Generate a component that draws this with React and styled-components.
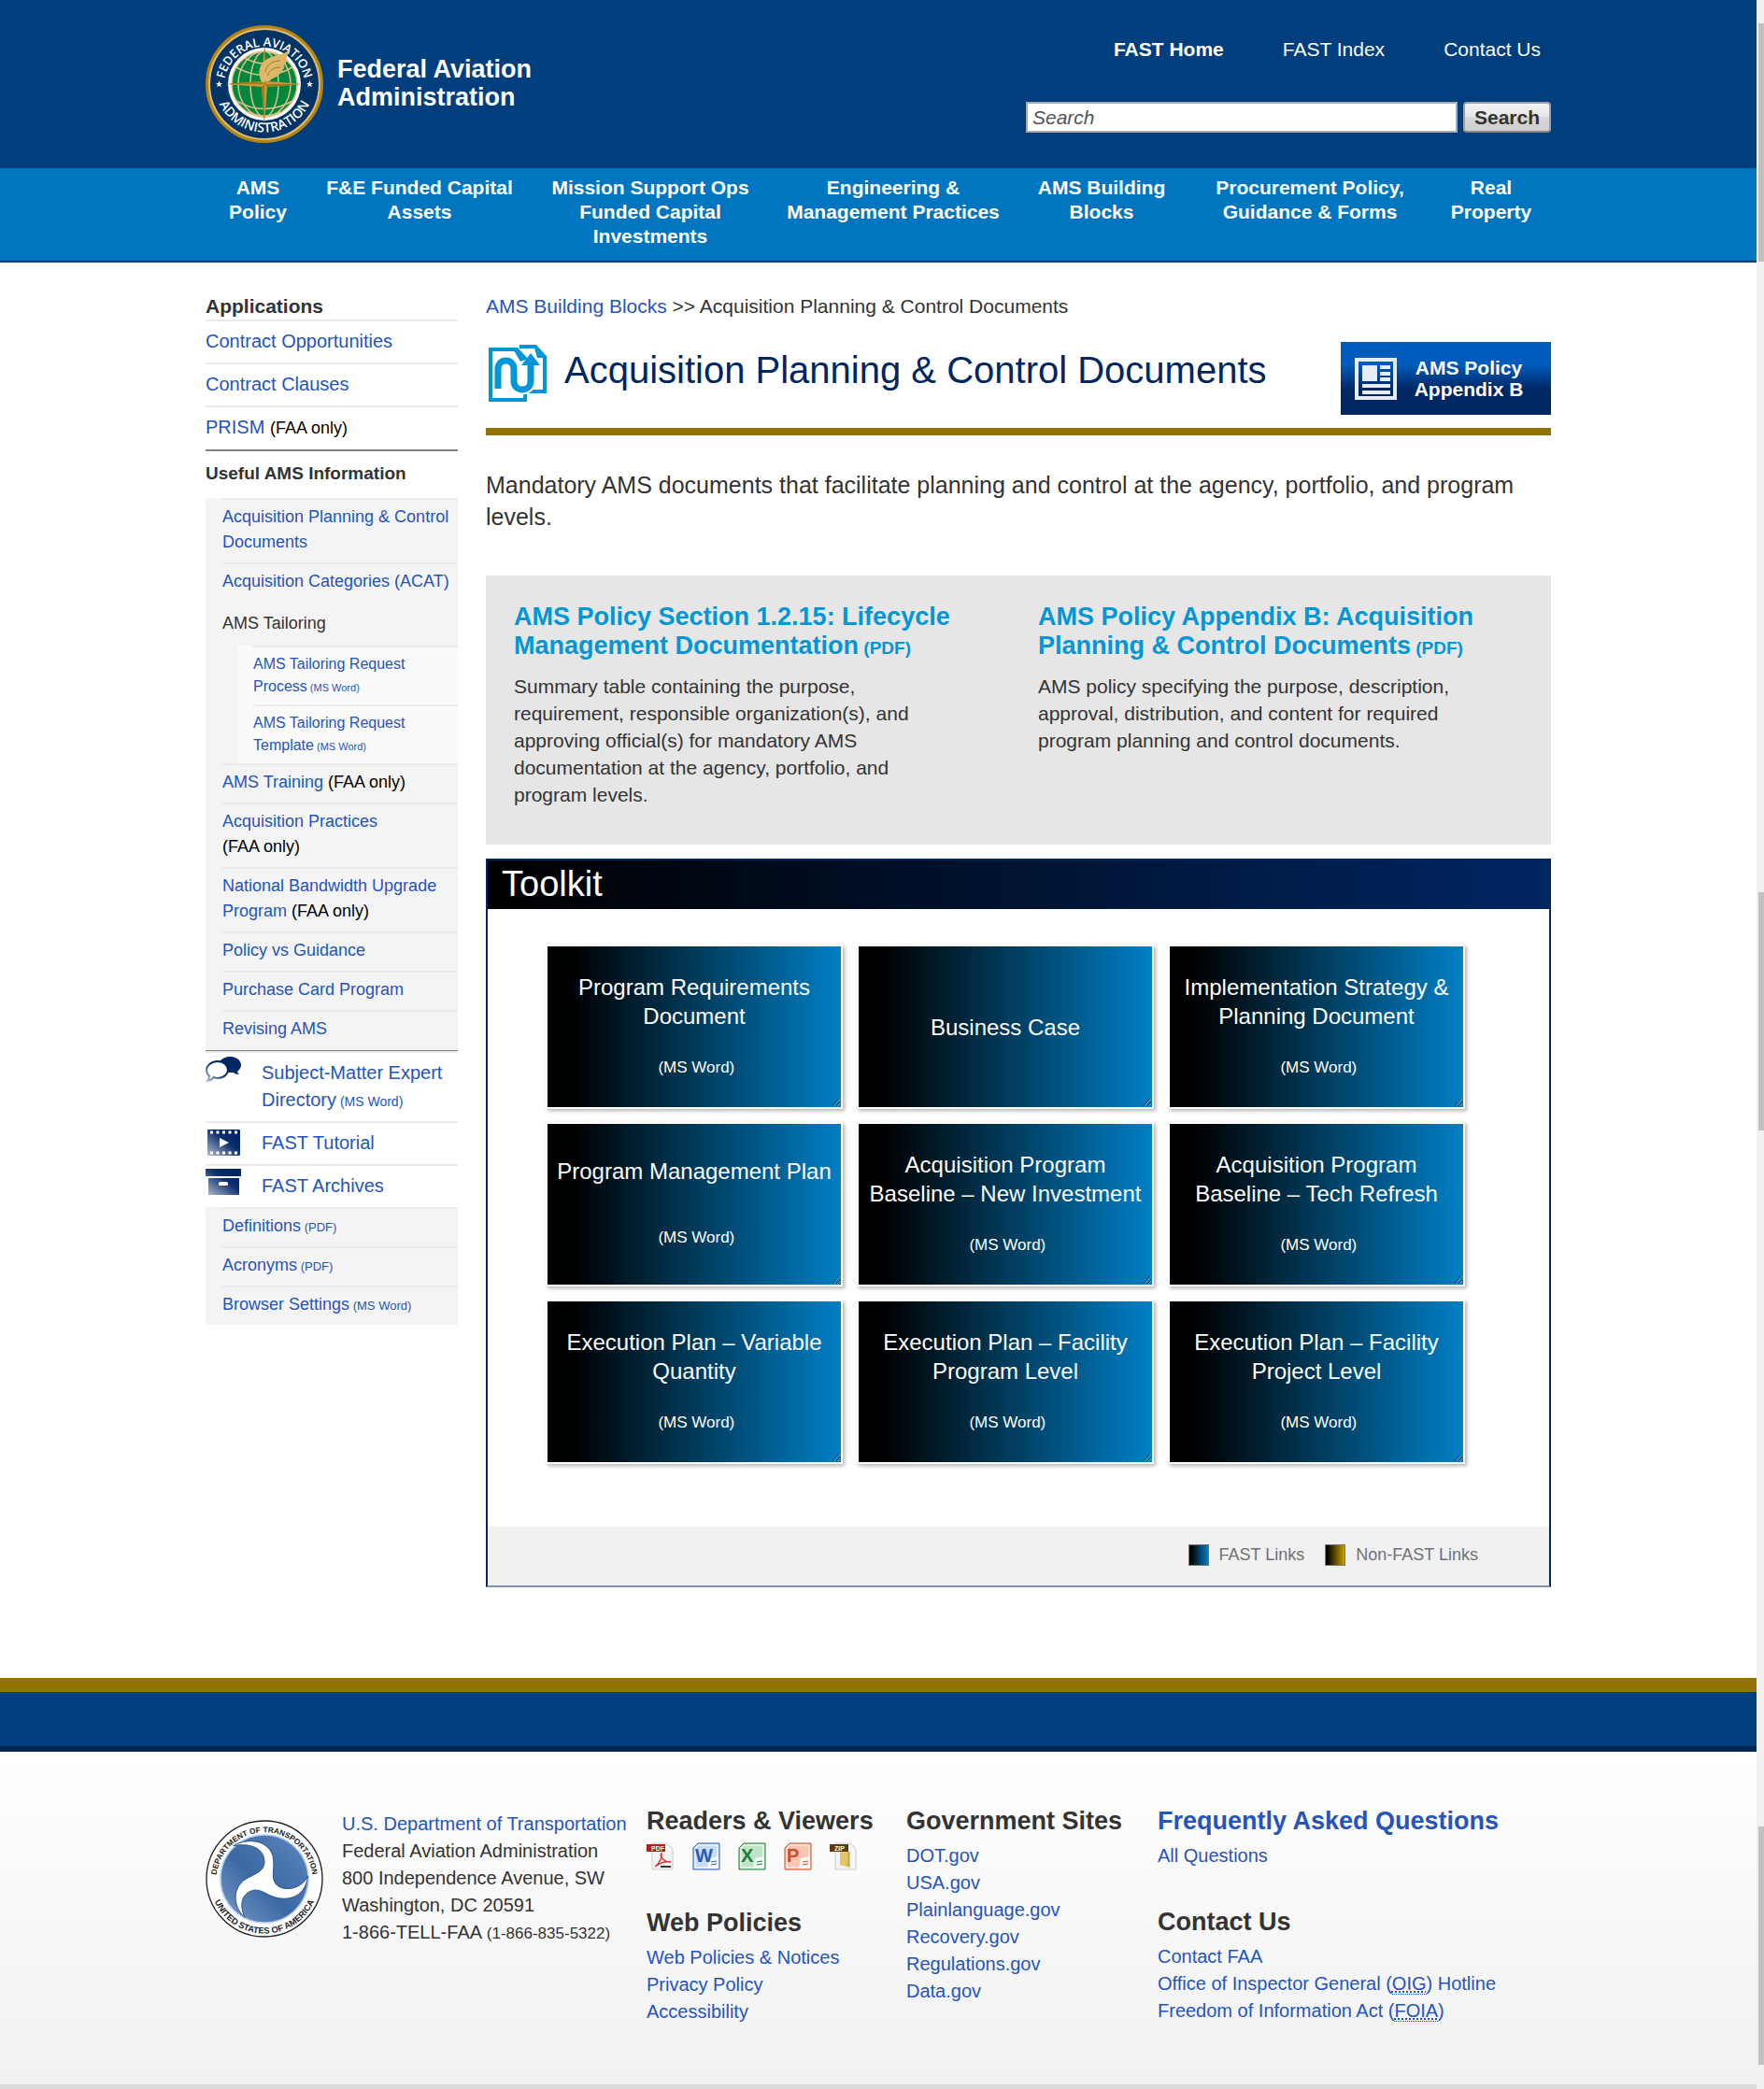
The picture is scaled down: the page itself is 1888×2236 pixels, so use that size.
import React from "react";
import styled, { createGlobalStyle } from "styled-components";

const color = {
  navy: "#003e7e",
  deep: "#002663",
  sky: "#0076c0",
  gold: "#927306",
  link: "#2554bd",
  text: "#333333",
  rule: "#eaeaea",
};

const GlobalStyle = createGlobalStyle`
  *, *::before, *::after { box-sizing: border-box; }
  body {
    margin: 0;
    background: #fff;
    color: ${color.text};
    font-family: "Liberation Sans", Arial, Helvetica, sans-serif;
    font-size: 21px;
    line-height: 28px;
  }
  h1, h2, h3, p, ul { margin: 0; padding: 0; font-weight: normal; }
  ul { list-style: none; }
  a { color: ${color.link}; text-decoration: none; }
  svg { display: block; flex: none; }
`;

const Shell = styled.div`
  display: flex;
`;
const Page = styled.div`
  flex: 1;
  min-width: 0;
`;
const Track = styled.div`
  flex: none;
  width: 8px;
  padding-left: 2px;
  background: #f0f0f0;
`;
const Thumb = styled.div`
  height: 255px;
  margin-top: ${(p) => p.$before}px;
  background: #c1c1c1;
`;
const Container = styled.div`
  max-width: 1440px;
  margin: 0 auto;
`;

/* Header */
const Header = styled.header`
  background: ${color.navy};
`;
const HeaderInner = styled(Container)`
  display: flex;
  justify-content: space-between;
  height: 180px;
`;
const Brand = styled.a`
  display: flex;
  gap: 15px;
  padding-top: 27px;
  color: #fff;
  font-size: 27px;
  font-weight: bold;
  line-height: 30px;
`;
const BrandName = styled.span`
  width: 220px;
  padding-top: 32px;
`;
const HeaderTools = styled.div`
  width: 562px;
  padding-top: 39px;
`;
const TopLinks = styled.nav`
  display: flex;
  justify-content: flex-end;
  gap: 63px;
  padding-right: 11px;
  margin-bottom: 42px;
`;
const TopLink = styled.a`
  color: #fff;
  font-weight: ${(p) => (p.$current ? "bold" : "normal")};
`;
const SearchForm = styled.form`
  display: flex;
  gap: 6px;
  height: 33px;
`;
const SearchInput = styled.input`
  flex: 1;
  min-width: 0;
  padding: 0 5px;
  border: 2px solid #aaa;
  background: #fff;
  font: italic 21px "Liberation Sans", Arial, sans-serif;
  &::placeholder { color: #555; opacity: 1; }
`;
const SearchButton = styled.button`
  width: 94px;
  padding: 0;
  border: 2px solid #a0a0a0;
  border-bottom-color: #888;
  border-radius: 4px;
  background: linear-gradient(#f4f4f4, #e6e6e6 50%, #d8d8d8 50%, #cecece);
  color: ${color.text};
  font: bold 21px "Liberation Sans", Arial, sans-serif;
`;

const NavBar = styled.nav`
  background: ${color.sky};
  border-bottom: 2px solid ${color.navy};
`;
const NavList = styled.ul`
  display: grid;
  grid-template-columns: 112fr 234fr 260fr 260fr 186fr 260fr 128fr;
  max-width: 1440px;
  margin: 0 auto;
  padding: 8px 0 13px;
`;
const NavItem = styled.li`
  padding: 0 8px;
  text-align: center;
  font-size: 21px;
  font-weight: bold;
  line-height: 26px;
  a { color: #fff; }
`;

/* Body */
const Body = styled(Container)`
  display: grid;
  grid-template-columns: 270px minmax(0, 1fr);
  gap: 30px;
  align-items: start;
  padding: 33px 0 97px;
`;
const SideHeading = styled.h2`
  font-size: 21px;
  font-weight: bold;
  line-height: 28px;
`;
const AppRow = styled.li`
  padding: 7px 0 8px;
  border-top: 2px solid ${color.rule};
  font-size: 20px;
  line-height: 29px;
`;
const FaaOnly = styled.span`
  color: #000;
  font-size: 18px;
  white-space: nowrap;
`;
const InfoHeading = styled.h2`
  padding: 10px 0 12px;
  border-top: 2px solid #808080;
  font-size: 19px;
  font-weight: bold;
  line-height: 28px;
`;
const InfoList = styled.ul`
  padding: 0 0 ${(p) => (p.$tail ? 1 : 0)}px 18px;
  background: #f4f4f4;
`;
const InfoRow = styled.li`
  padding: 5px 0 8px;
  border-top: 2px solid ${color.rule};
  font-size: 18px;
  line-height: 27px;
`;
const GroupRow = styled.li`
  font-size: 18px;
  line-height: 27px;
`;
const GroupLabel = styled.span`
  display: block;
  padding: 10px 0;
`;
const SubList = styled.ul`
  margin-left: 16px;
  padding-left: 17px;
  background: #fafafa;
`;
const SubRow = styled.li`
  padding: 6px 40px 7px 0;
  border-top: 2px solid ${color.rule};
  font-size: 16px;
  line-height: 24px;
`;
const FileType = styled.small`
  font-size: ${(p) => p.$size}px;
  line-height: 1;
`;
const MediaList = styled.ul`
  border-top: 1px solid #808080;
`;
const MediaRow = styled.li`
  display: flex;
  gap: 22px;
  border-top: 2px solid ${color.rule};
  font-size: 20px;
  line-height: 29px;
  a { padding: 7px 0 8px; }
`;

/* Article */
const Crumbs = styled.nav`
  margin-bottom: 24px;
`;
const TitleRow = styled.div`
  display: flex;
  padding-bottom: 14px;
  border-bottom: 8px solid ${color.gold};
`;
const Title = styled.h1`
  flex: 1;
  padding: 6px 0 0 17px;
  color: ${color.deep};
  font-size: 40px;
  line-height: 48px;
`;
const PolicyButton = styled.a`
  display: flex;
  align-items: center;
  gap: 17px;
  width: 225px;
  height: 78px;
  padding-left: 15px;
  background: linear-gradient(#005cbc 30%, #002663 66%);
  color: #fff;
  font-size: 21px;
  font-weight: bold;
  line-height: 23px;
  text-align: center;
`;
const PolicyText = styled.span`
  width: 120px;
`;
const Intro = styled.p`
  padding: 36px 0 46px;
  font-size: 25px;
  line-height: 34px;
`;
const Summary = styled.section`
  display: grid;
  grid-template-columns: 1fr 1fr;
  gap: 83px;
  margin-bottom: 15px;
  padding: 29px 71px 39px 30px;
  background: #e6e6e6;
`;
const SummaryTitle = styled.h2`
  margin-bottom: 13px;
  font-size: 27px;
  font-weight: bold;
  line-height: 31px;
  a { color: #0096d8; }
`;
const SummaryText = styled.p`
  font-size: 21px;
  line-height: 29px;
`;
const Toolkit = styled.section`
  border: 2px solid ${color.deep};
  border-bottom-color: #7e90b4;
`;
const ToolkitTitle = styled.h2`
  padding: 3px 0 5px 15px;
  background: linear-gradient(90deg, #000, ${color.deep});
  color: #fff;
  font-size: 38px;
  line-height: 44px;
`;
const CardGrid = styled.ul`
  display: grid;
  grid-template-columns: repeat(3, 1fr);
  gap: 14px 15px;
  padding: 38px 90px 67px 62px;
`;
const Card = styled.a`
  position: relative;
  display: flex;
  flex-direction: column;
  align-items: center;
  justify-content: center;
  gap: ${(p) => (p.$short ? 40 : 24)}px;
  height: 176px;
  padding: 0 6px;
  border: 2px solid #fff;
  background: linear-gradient(90deg, #000 8%, #007fc5) padding-box;
  box-shadow: 2px 2px 4px rgba(0, 0, 0, 0.3);
  color: #fff;
  font-size: 24px;
  line-height: 31px;
  text-align: center;
`;
const CardType = styled.span`
  font-size: 17px;
`;
const Grip = styled.svg`
  position: absolute;
  right: 1px;
  bottom: 1px;
`;
const Legend = styled.div`
  display: flex;
  justify-content: flex-end;
  align-items: center;
  gap: 22px;
  height: 63px;
  padding: 0 76px 3px 0;
  background: #f1f1f1;
  color: #707070;
  font-size: 18px;
`;
const LegendItem = styled.span`
  display: flex;
  align-items: center;
  gap: 11px;
`;
const Swatch = styled.span`
  width: 22px;
  height: 23px;
  border: 1px solid #777;
  background: linear-gradient(90deg, #000 8%, ${(p) => p.$tone});
`;

/* Footer */
const Bands = styled.div`
  height: 79px;
  border-top: 15px solid ${color.gold};
  border-bottom: 6px solid #00264e;
  background: ${color.navy};
`;
const Footer = styled.footer`
  padding: 58px 0 63px;
  border-bottom: 6px solid #dcdcdc;
  background: linear-gradient(#ffffff, #f1f1f1);
`;
const FooterInner = styled(Container)`
  display: grid;
  grid-template-columns: 126px 306px 258px 249px minmax(0, 1fr);
  column-gap: 20px;
  font-size: 20px;
  line-height: 29px;
`;
const SealSlot = styled.div`
  padding-top: 15px;
`;
const Address = styled.address`
  padding-top: 5px;
  font-style: normal;
  small { font-size: 17px; line-height: 1; }
`;
const FooterColumn = styled.div`
  display: flex;
  flex-direction: column;
  gap: 40px;
`;
const FooterHeading = styled.h2`
  margin-bottom: 7px;
  font-size: 27px;
  font-weight: bold;
  line-height: 32px;
  white-space: nowrap;
`;
const ViewerList = styled.ul`
  display: flex;
  gap: 19px;
`;
const Abbr = styled.abbr`
  text-decoration: underline dotted;
  border-bottom: 1px dotted ${color.link};
`;

const RingText = styled.text`
  fill: ${(p) => p.$fill};
  font-family: ${(p) => p.$family};
  font-size: ${(p) => p.$size}px;
  font-weight: ${(p) => p.$weight};
  text-anchor: middle;
`;
const humanist = '"Open Sans", "Noto Sans", sans-serif';
const grotesque = '"Liberation Sans", Arial, sans-serif';

function FaaSeal() {
  return (
    <svg width="126" height="126" viewBox="0 0 126 126" role="img" aria-label="FAA seal">
      <defs>
        <path id="faaTop" d="M19.500 66a43.500 43.500 0 0 1 87 0" />
        <path id="faaBottom" d="M9.500 61a53.500 53.500 0 0 0 107 0" />
      </defs>
      <circle cx="63" cy="63" r="60.500" fill="#003366" stroke="#b5830f" strokeWidth="5" />
      <circle cx="63" cy="63" r="59" fill="none" stroke="#d9b878" strokeWidth="2" />
      <RingText $family={humanist} $fill="#fff" $size={13} $weight={600}>
        <textPath href="#faaTop" startOffset="50%">FEDERAL AVIATION</textPath>
      </RingText>
      <RingText $family={humanist} $fill="#fff" $size={14} $weight={600}>
        <textPath href="#faaBottom" startOffset="50%">ADMINISTRATION</textPath>
      </RingText>
      <g fill="#fff">
        <path id="star" d="M14.500 59.500l1 2.500h2.500l-2 1.700.8 2.600-2.300-1.600-2.300 1.600.8-2.600-2-1.700h2.500z" />
        <use href="#star" x="97" />
      </g>
      <circle cx="63" cy="63" r="39" fill="#fff" />
      <circle cx="63" cy="63" r="35" fill="#00873e" />
      <g fill="none" stroke="#dcc08a" strokeWidth="1.500">
        <circle cx="63" cy="63" r="35" />
        <ellipse cx="63" cy="63" rx="28" ry="35" />
        <ellipse cx="63" cy="63" rx="15" ry="35" />
        <path d="M33 45q30 17 60 0M33 81q30 17 60 0M42 35q21 12 42 0M46 93q17 8 34 0" />
      </g>
      <path d="M63 20l3 40 38 3-38 3-3 40-3-40-39-3 39-3z" fill="#c99a3c" />
      <path d="M63 63V20l3 40zM63 63h41l-38 3zM63 63v43l-3-40zM63 63H21l39-3z" fill="#a37a1c" />
      <path d="M60 61c-5-10-3-21 8-26 8-3 16-4 21-8-1 5-2 7-3 9l2-1c-1 5-3 7-5 9h2c-2 4-4 6-7 7h2c-3 5-8 5-12 9z" fill="#dcb76c" />
      <path d="M64 50c1-8 8-12 16-12M66 54c3-7 8-9 14-9" fill="none" stroke="#a37a1c" />
    </svg>
  );
}

function DotSeal() {
  return (
    <svg width="126" height="126" viewBox="16 25 378 378" role="img" aria-label="Department of Transportation seal">
      <defs>
        <linearGradient id="dotBlue" x1="0" y1="1" x2="1" y2="0">
          <stop offset="0" stopColor="#7c9bcb" />
          <stop offset=".45" stopColor="#3b69a3" />
          <stop offset="1" stopColor="#5c86bd" />
        </linearGradient>
        <path id="dotTop" d="M50 220a155 155 0 0 1 310 0" />
        <path id="dotBottom" d="M29 214a176 176 0 0 0 352 0" />
      </defs>
      <circle cx="205" cy="214" r="186" fill="#fff" stroke="#222" strokeWidth="4" />
      <circle cx="205" cy="214" r="141" fill="url(#dotBlue)" stroke="#b9cdf0" strokeWidth="5" />
      <RingText $family={grotesque} $fill="#222" $size={25} $weight={700}>
        <textPath href="#dotTop" startOffset="50%">DEPARTMENT OF TRANSPORTATION</textPath>
      </RingText>
      <RingText $family={grotesque} $fill="#222" $size={28} $weight={700}>
        <textPath href="#dotBottom" startOffset="50%">UNITED STATES OF AMERICA</textPath>
      </RingText>
      <path
        d="M105 108C150 82 215 88 232 140c8 38-6 62 6 85 16 32 84 28 107-20-8 62-54 80-100 70-30-7-45-25-70-25-37 5-55 40-33 88-42-38-38-98 3-123 30-17 60-25 60-55 0-45-45-62-100-52z"
        fill="#fff"
        stroke="#2d568f"
        strokeWidth="3"
      />
    </svg>
  );
}

function RouteIcon() {
  return (
    <svg width="67" height="66" viewBox="0 0 67 66" aria-hidden="true">
      <g fill="none" stroke="#0096d8" strokeWidth="4">
        <path d="M30 8H5v54h37V50" />
        <path d="M36 5h17l10 11v37H46" />
      </g>
      <path d="M28 6h6l11 12-8 3zM51 3l14 14H55z" fill="#0096d8" />
      <path d="M13 50V29c0-12 17-12 17 0v13c0 12 18 12 18 0V20" fill="none" stroke="#fff" strokeWidth="11" />
      <path d="M13 50V29c0-12 17-12 17 0v13c0 12 18 12 18 0V20" fill="none" stroke="#0096d8" strokeWidth="7" />
      <path d="M38 25l10-13 10 13z" fill="#0096d8" />
    </svg>
  );
}

function NewspaperIcon() {
  return (
    <svg width="45" height="45" viewBox="0 0 45 45" aria-hidden="true">
      <path d="M2 2h41v41H2z" fill="none" stroke="#e6edf6" strokeWidth="4" />
      <path d="M8 8h16v17H8zM27 8h11v4H27zM27 15h11v4H27zM27 21h11v4H27zM8 28h30v4H8zM8 35h30v4H8z" fill="#e6edf6" />
    </svg>
  );
}

function ShadeDefs({ id }) {
  return (
    <defs>
      <linearGradient id={id} x1="0" y1="1" x2=".8" y2=".2">
        <stop offset="0" stopColor="#b4bfd2" />
        <stop offset=".7" stopColor="#0d2f6b" />
        <stop offset="1" stopColor="#002663" />
      </linearGradient>
    </defs>
  );
}

function ChatIcon() {
  return (
    <svg width="38" height="36" viewBox="0 0 38 36" aria-hidden="true">
      <ShadeDefs id="shadeChat" />
      <path d="M26 4c7 0 12 4 12 9 0 3-2 5-4 7 0 1 1 2 2 3-3 0-5-1-6-2H16V8c2-2 6-4 10-4z" fill="#002663" />
      <path d="M13 9c7 0 11 5 11 9s-4 9-11 9c-2 0-3 0-4-1-2 2-4 4-7 4 1-1 2-3 2-5-2-2-3-4-3-7 0-4 5-9 12-9z" fill="#fff" stroke="url(#shadeChat)" strokeWidth="2" />
    </svg>
  );
}

function FilmIcon() {
  return (
    <svg width="38" height="36" viewBox="0 0 38 36" aria-hidden="true">
      <ShadeDefs id="shadeFilm" />
      <rect x="2" y="7" width="35" height="28" rx="1" fill="url(#shadeFilm)" />
      <path d="M5 10h30M5 32h30" stroke="#fff" strokeWidth="3" strokeDasharray="3 3.500" />
      <path d="M15 16l10 5-10 5z" fill="#fff" />
    </svg>
  );
}

function ArchiveIcon() {
  return (
    <svg width="38" height="36" viewBox="0 0 38 36" aria-hidden="true">
      <ShadeDefs id="shadeArchive" />
      <path d="M0 3h38v8H0zM3 13h33v18H3z" fill="url(#shadeArchive)" />
      <rect x="14" y="17" width="10" height="4" rx="1.500" fill="#fff" />
    </svg>
  );
}

function OfficeIcon({ letter, tone, tint, label }) {
  return (
    <svg width="30" height="30" viewBox="0 0 30 30" role="img" aria-label={label}>
      <path d="M6 1h23v28H1V6z" fill={tint} stroke={tone} />
      <path d="M6 3h21v24H3V7z" fill="none" stroke="#fff" />
      <path d="M18 17l10-2v13H16z" fill="#fff" opacity=".85" />
      <path d="M20 21l6-1M20 24l6-1" stroke={tone} />
      <text x="3" y="21" fill={tone} fontFamily="Liberation Sans" fontWeight="bold" fontSize="20">{letter}</text>
    </svg>
  );
}

function TaggedFileIcon({ tag, tone, label, children }) {
  return (
    <svg width="30" height="30" viewBox="0 0 30 30" role="img" aria-label={label}>
      <path d="M6 1h16l6 6v22H6z" fill="#f4f4f4" stroke="#ccc" />
      {children}
      <path d="M0 2h20v8H0z" fill={tone} />
      <text x="5" y="9" fill="#fff" fontFamily="Liberation Sans" fontWeight="bold" fontSize="7">{tag}</text>
    </svg>
  );
}

const navItems = [
  "AMS Policy",
  "F&E Funded Capital Assets",
  "Mission Support Ops Funded Capital Investments",
  "Engineering & Management Practices",
  "AMS Building Blocks",
  "Procurement Policy, Guidance & Forms",
  "Real Property",
];

const infoRows = [
  { label: "AMS Training", faa: true },
  { label: "Acquisition Practices", faa: true },
  { label: "National Bandwidth Upgrade Program", faa: true },
  { label: "Policy vs Guidance" },
  { label: "Purchase Card Program" },
  { label: "Revising AMS" },
];

const referenceRows = [
  { label: "Definitions", type: "(PDF)" },
  { label: "Acronyms", type: "(PDF)" },
  { label: "Browser Settings", type: "(MS Word)" },
];

const cards = [
  { label: "Program Requirements Document", word: true },
  { label: "Business Case" },
  { label: "Implementation Strategy & Planning Document", word: true },
  { label: "Program Management Plan", word: true, short: true },
  { label: "Acquisition Program Baseline – New Investment", word: true },
  { label: "Acquisition Program Baseline – Tech Refresh", word: true },
  { label: "Execution Plan – Variable Quantity", word: true },
  { label: "Execution Plan – Facility Program Level", word: true },
  { label: "Execution Plan – Facility Project Level", word: true },
];

function LinkList({ items }) {
  return (
    <ul>
      {items.map((item, i) => (
        <li key={i}><a href="#">{item}</a></li>
      ))}
    </ul>
  );
}

function Sidebar() {
  return (
    <aside>
      <SideHeading>Applications</SideHeading>
      <ul>
        <AppRow><a href="#">Contract Opportunities</a></AppRow>
        <AppRow><a href="#">Contract Clauses</a></AppRow>
        <AppRow><a href="#">PRISM</a> <FaaOnly>(FAA only)</FaaOnly></AppRow>
      </ul>
      <InfoHeading>Useful AMS Information</InfoHeading>
      <InfoList $tail>
        <InfoRow><a href="#">Acquisition Planning &amp; Control Documents</a></InfoRow>
        <InfoRow><a href="#">Acquisition Categories (ACAT)</a></InfoRow>
        <GroupRow>
          <GroupLabel>AMS Tailoring</GroupLabel>
          <SubList>
            {["Process", "Template"].map((name) => (
              <SubRow key={name}>
                <a href="#">AMS Tailoring Request {name}<FileType $size={11}> (MS Word)</FileType></a>
              </SubRow>
            ))}
          </SubList>
        </GroupRow>
        {infoRows.map((row) => (
          <InfoRow key={row.label}>
            <a href="#">{row.label}</a>
            {row.faa && <> <FaaOnly>(FAA only)</FaaOnly></>}
          </InfoRow>
        ))}
      </InfoList>
      <MediaList>
        <MediaRow><ChatIcon /><a href="#">Subject-Matter Expert Directory<FileType $size={14}> (MS Word)</FileType></a></MediaRow>
        <MediaRow><FilmIcon /><a href="#">FAST Tutorial</a></MediaRow>
        <MediaRow><ArchiveIcon /><a href="#">FAST Archives</a></MediaRow>
      </MediaList>
      <InfoList>
        {referenceRows.map((row) => (
          <InfoRow key={row.label}>
            <a href="#">{row.label}<FileType $size={13}> {row.type}</FileType></a>
          </InfoRow>
        ))}
      </InfoList>
    </aside>
  );
}

export default function App() {
  return (
    <Shell>
      <GlobalStyle />
      <Page>
        <Header>
          <HeaderInner>
            <Brand href="#">
              <FaaSeal />
              <BrandName>Federal Aviation Administration</BrandName>
            </Brand>
            <HeaderTools>
              <TopLinks>
                <TopLink href="#" $current>FAST Home</TopLink>
                <TopLink href="#">FAST Index</TopLink>
                <TopLink href="#">Contact Us</TopLink>
              </TopLinks>
              <SearchForm onSubmit={(e) => e.preventDefault()}>
                <SearchInput type="text" aria-label="Search" placeholder="Search" />
                <SearchButton type="submit">Search</SearchButton>
              </SearchForm>
            </HeaderTools>
          </HeaderInner>
        </Header>
        <NavBar>
          <NavList>
            {navItems.map((item) => (
              <NavItem key={item}><a href="#">{item}</a></NavItem>
            ))}
          </NavList>
        </NavBar>

        <Body>
          <Sidebar />
          <main>
            <Crumbs>
              <a href="#">AMS Building Blocks</a> &gt;&gt; Acquisition Planning &amp; Control Documents
            </Crumbs>
            <TitleRow>
              <RouteIcon />
              <Title>Acquisition Planning &amp; Control Documents</Title>
              <PolicyButton href="#">
                <NewspaperIcon />
                <PolicyText>AMS Policy Appendix B</PolicyText>
              </PolicyButton>
            </TitleRow>
            <Intro>
              Mandatory AMS documents that facilitate planning and control at the agency, portfolio, and program levels.
            </Intro>
            <Summary>
              <div>
                <SummaryTitle>
                  <a href="#">AMS Policy Section 1.2.15: Lifecycle Management Documentation<FileType $size={19}> (PDF)</FileType></a>
                </SummaryTitle>
                <SummaryText>
                  Summary table containing the purpose, requirement, responsible organization(s), and approving official(s) for mandatory AMS documentation at the agency, portfolio, and program levels.
                </SummaryText>
              </div>
              <div>
                <SummaryTitle>
                  <a href="#">AMS Policy Appendix B: Acquisition Planning &amp; Control Documents<FileType $size={19}> (PDF)</FileType></a>
                </SummaryTitle>
                <SummaryText>
                  AMS policy specifying the purpose, description, approval, distribution, and content for required program planning and control documents.
                </SummaryText>
              </div>
            </Summary>
            <Toolkit>
              <ToolkitTitle>Toolkit</ToolkitTitle>
              <CardGrid>
                {cards.map((card) => (
                  <li key={card.label}>
                    <Card href="#" $short={card.short}>
                      <span>{card.label}</span>
                      {card.word && <CardType>&nbsp;(MS Word)</CardType>}
                      <Grip width="9" height="9" viewBox="0 0 9 9" aria-hidden="true">
                        <path d="M1 9L8 1M5 9l4-4" stroke="#123" />
                        <path d="M2 9l7-8M6 9l3-3" stroke="#9cc4dc" strokeWidth=".700" />
                      </Grip>
                    </Card>
                  </li>
                ))}
              </CardGrid>
              <Legend>
                <LegendItem><Swatch $tone="#007fc5" />FAST Links</LegendItem>
                <LegendItem><Swatch $tone="#c9a000" />Non-FAST Links</LegendItem>
              </Legend>
            </Toolkit>
          </main>
        </Body>

        <Bands />
        <Footer>
          <FooterInner>
            <SealSlot><DotSeal /></SealSlot>
            <Address>
              <a href="#">U.S. Department of Transportation</a><br />
              Federal Aviation Administration<br />
              800 Independence Avenue, SW<br />
              Washington, DC 20591<br />
              1-866-TELL-FAA<small> (1-866-835-5322)</small>
            </Address>
            <FooterColumn>
              <section>
                <FooterHeading>Readers &amp; Viewers</FooterHeading>
                <ViewerList>
                  <li>
                    <a href="#">
                      <TaggedFileIcon tag="PDF" tone="#c4161c" label="PDF reader">
                        <path d="M9 26c4-3 8-9 7-14-3 3 4 10 10 9-5-1-12 1-17 5z" fill="none" stroke="#e0302c" strokeWidth="1.500" />
                        <path d="M15 26h11" stroke="#333" strokeWidth="2" />
                      </TaggedFileIcon>
                    </a>
                  </li>
                  <li><a href="#"><OfficeIcon letter="W" tone="#2a5bb0" tint="#c9dcf5" label="Word viewer" /></a></li>
                  <li><a href="#"><OfficeIcon letter="X" tone="#237a3c" tint="#bfe3c4" label="Excel viewer" /></a></li>
                  <li><a href="#"><OfficeIcon letter="P" tone="#d2492a" tint="#f8c5b0" label="PowerPoint viewer" /></a></li>
                  <li>
                    <a href="#">
                      <TaggedFileIcon tag="ZIP" tone="#5d3b12" label="ZIP reader">
                        <path d="M11 10h11v17l-11-3z" fill="#e3c567" />
                        <path d="M20 10v16" stroke="#b8923a" />
                      </TaggedFileIcon>
                    </a>
                  </li>
                </ViewerList>
              </section>
              <section>
                <FooterHeading>Web Policies</FooterHeading>
                <LinkList items={["Web Policies & Notices", "Privacy Policy", "Accessibility"]} />
              </section>
            </FooterColumn>
            <FooterColumn>
              <section>
                <FooterHeading>Government Sites</FooterHeading>
                <LinkList
                  items={["DOT.gov", "USA.gov", "Plainlanguage.gov", "Recovery.gov", "Regulations.gov", "Data.gov"]}
                />
              </section>
            </FooterColumn>
            <FooterColumn>
              <section>
                <FooterHeading><a href="#">Frequently Asked Questions</a></FooterHeading>
                <LinkList items={["All Questions"]} />
              </section>
              <section>
                <FooterHeading>Contact Us</FooterHeading>
                <LinkList
                  items={[
                    "Contact FAA",
                    <>Office of Inspector General (<Abbr>OIG</Abbr>) Hotline</>,
                    <>Freedom of Information Act (<Abbr>FOIA</Abbr>)</>,
                  ]}
                />
              </section>
            </FooterColumn>
          </FooterInner>
        </Footer>
      </Page>
      <Track aria-hidden="true">
        <Thumb $before={25} />
        <Thumb $before={675} />
        <Thumb $before={745} />
      </Track>
    </Shell>
  );
}
